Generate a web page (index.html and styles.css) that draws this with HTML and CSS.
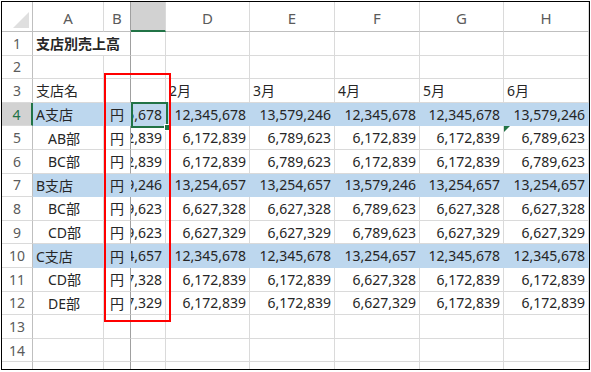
FILE: index.html
```html
<!DOCTYPE html>
<html lang="ja">
  <head>
    <meta charset="UTF-8" />
    <title>支店別売上高</title>
    <link rel="stylesheet" href="styles.css">
  </head>
  <body>
    <div class="sheet">
      <div class="row head">
        <div class="corner"></div>
        <div class="ch">A</div>
        <div class="ch b">B</div>
        <div class="ch sel"></div>
        <div class="ch">D</div>
        <div class="ch">E</div>
        <div class="ch">F</div>
        <div class="ch">G</div>
        <div class="ch">H</div>
      </div>
      <div class="row">
        <div class="rh">1</div>
        <div class="c title b">支店別売上高</div>
        <div class="c"></div>
        <div class="c"></div>
        <div class="c"></div>
        <div class="c"></div>
        <div class="c"></div>
        <div class="c"></div>
      </div>
      <div class="row">
        <div class="rh">2</div>
        <div class="c"></div>
        <div class="c b"></div>
        <div class="c"></div>
        <div class="c"></div>
        <div class="c"></div>
        <div class="c"></div>
        <div class="c"></div>
        <div class="c"></div>
      </div>
      <div class="row">
        <div class="rh">3</div>
        <div class="c">支店名</div>
        <div class="c b"></div>
        <div class="c"></div>
        <div class="c">2月</div>
        <div class="c">3月</div>
        <div class="c">4月</div>
        <div class="c">5月</div>
        <div class="c">6月</div>
      </div>
      <!-- 支店の行は青 -->
      <div class="row blue">
        <div class="rh sel">4</div>
        <div class="c">A支店</div>
        <div class="c b yen">円</div>
        <div class="c n">12,345,678</div>
        <div class="c n">12,345,678</div>
        <div class="c n">13,579,246</div>
        <div class="c n">12,345,678</div>
        <div class="c n">12,345,678</div>
        <div class="c n">13,579,246</div>
      </div>
      <div class="row">
        <div class="rh">5</div>
        <div class="c i">AB部</div>
        <div class="c b yen">円</div>
        <div class="c n">6,172,839</div>
        <div class="c n">6,172,839</div>
        <div class="c n">6,789,623</div>
        <div class="c n">6,172,839</div>
        <div class="c n">6,172,839</div>
        <div class="c n err">6,789,623</div>
      </div>
      <div class="row">
        <div class="rh">6</div>
        <div class="c i">BC部</div>
        <div class="c b yen">円</div>
        <div class="c n">6,172,839</div>
        <div class="c n">6,172,839</div>
        <div class="c n">6,789,623</div>
        <div class="c n">6,172,839</div>
        <div class="c n">6,172,839</div>
        <div class="c n">6,789,623</div>
      </div>
      <div class="row blue">
        <div class="rh">7</div>
        <div class="c">B支店</div>
        <div class="c b yen">円</div>
        <div class="c n">13,579,246</div>
        <div class="c n">13,254,657</div>
        <div class="c n">13,254,657</div>
        <div class="c n">13,579,246</div>
        <div class="c n">13,254,657</div>
        <div class="c n">13,254,657</div>
      </div>
      <div class="row">
        <div class="rh">8</div>
        <div class="c i">BC部</div>
        <div class="c b yen">円</div>
        <div class="c n">6,789,623</div>
        <div class="c n">6,627,328</div>
        <div class="c n">6,627,328</div>
        <div class="c n">6,789,623</div>
        <div class="c n">6,627,328</div>
        <div class="c n">6,627,328</div>
      </div>
      <div class="row">
        <div class="rh">9</div>
        <div class="c i">CD部</div>
        <div class="c b yen">円</div>
        <div class="c n">6,789,623</div>
        <div class="c n">6,627,329</div>
        <div class="c n">6,627,329</div>
        <div class="c n">6,789,623</div>
        <div class="c n">6,627,329</div>
        <div class="c n">6,627,329</div>
      </div>
      <div class="row blue">
        <div class="rh">10</div>
        <div class="c">C支店</div>
        <div class="c b yen">円</div>
        <div class="c n">13,254,657</div>
        <div class="c n">12,345,678</div>
        <div class="c n">12,345,678</div>
        <div class="c n">13,254,657</div>
        <div class="c n">12,345,678</div>
        <div class="c n">12,345,678</div>
      </div>
      <div class="row">
        <div class="rh">11</div>
        <div class="c i">CD部</div>
        <div class="c b yen">円</div>
        <div class="c n">6,627,328</div>
        <div class="c n">6,172,839</div>
        <div class="c n">6,172,839</div>
        <div class="c n">6,627,328</div>
        <div class="c n">6,172,839</div>
        <div class="c n">6,172,839</div>
      </div>
      <div class="row">
        <div class="rh">12</div>
        <div class="c i">DE部</div>
        <div class="c b yen">円</div>
        <div class="c n">6,627,329</div>
        <div class="c n">6,172,839</div>
        <div class="c n">6,172,839</div>
        <div class="c n">6,627,329</div>
        <div class="c n">6,172,839</div>
        <div class="c n">6,172,839</div>
      </div>
      <div class="row">
        <div class="rh">13</div>
        <div class="c"></div>
        <div class="c b"></div>
        <div class="c"></div>
        <div class="c"></div>
        <div class="c"></div>
        <div class="c"></div>
        <div class="c"></div>
        <div class="c"></div>
      </div>
      <div class="row">
        <div class="rh">14</div>
        <div class="c"></div>
        <div class="c b"></div>
        <div class="c"></div>
        <div class="c"></div>
        <div class="c"></div>
        <div class="c"></div>
        <div class="c"></div>
        <div class="c"></div>
      </div>
      <div class="row">
        <div class="rh"></div>
        <div class="c"></div>
        <div class="c b"></div>
        <div class="c"></div>
        <div class="c"></div>
        <div class="c"></div>
        <div class="c"></div>
        <div class="c"></div>
        <div class="c"></div>
      </div>

      <!-- 選択セルと赤枠 -->
      <div class="cursor"></div>
      <div class="handle"></div>
      <div class="mark"></div>
    </div>
  </body>
</html>
```

FILE: styles.css
```css
body {
  margin: 0;
  background: #fff;
  font-family: "Noto Sans", "Noto Sans CJK JP", sans-serif;
  font-size: 14px;
  color: #262626;
}

.sheet {
  position: relative;
  width: 587px;
  height: 367px;
  margin: 1px 0 0 1px;
  border: 1px solid #000;
  overflow: hidden;
}

.row {
  display: grid;
  grid-template-columns: 31px 71px 27px 35px 84px 85px 85px 84px 85px;
  height: 23.6px;
}

.row.head {
  height: 30px;
}

.row > div {
  box-sizing: border-box;
  display: flex;
  align-items: center;
  padding: 0 3px;
  overflow: hidden;
  white-space: nowrap;
  border-right: 1px solid #dadada;
  border-bottom: 1px solid #dadada;
}

/* 見出し */
.corner {
  position: relative;
  background: #fff;
  border-bottom-color: #bfbfbf !important;
  border-right-color: #bfbfbf !important;
}

.corner::after {
  content: "";
  position: absolute;
  right: 3px;
  bottom: 3px;
  border-left: 16px solid transparent;
  border-bottom: 16px solid #dfdfdf;
}

.row > .ch {
  justify-content: center;
  padding-top: 3px;
  font-size: 15px;
  color: #5b5b5b;
  background: #fff;
  border-bottom-color: #bfbfbf;
}

.row > .ch.sel {
  background: #d2d2d2;
  border-bottom: 2px solid #217346;
}

.row > .rh {
  justify-content: center;
  padding: 0;
  color: #5b5b5b;
  background: #fff;
  border-right-color: #bfbfbf;
}

.row > .rh.sel {
  background: #d2d2d2;
  color: #217346;
  border-right: 2px solid #217346;
}

.title {
  grid-column: span 2;
  font-weight: bold;
}

.n {
  justify-content: flex-end;
}

.i {
  padding-left: 15px !important;
}

.yen {
  justify-content: flex-end;
  padding-right: 6px !important;
}

.row.blue > .c {
  background: #bdd7ee;
  border-color: #bdd7ee;
}

.row > .b {
  border-right-color: #a0a0a0;
}

.err {
  position: relative;
}

.err::before {
  content: "";
  position: absolute;
  left: 0;
  top: 0;
  border-top: 6px solid #217346;
  border-right: 6px solid transparent;
}

.cursor {
  position: absolute;
  left: 129px;
  top: 100px;
  width: 37px;
  height: 26px;
  box-sizing: border-box;
  border: 2px solid #217346;
}

.handle {
  position: absolute;
  left: 162px;
  top: 122px;
  width: 5px;
  height: 5px;
  background: #217346;
  border: 1px solid #fff;
}

.mark {
  position: absolute;
  left: 102px;
  top: 71px;
  width: 67px;
  height: 249px;
  box-sizing: border-box;
  border: 2px solid #f00;
}
```
